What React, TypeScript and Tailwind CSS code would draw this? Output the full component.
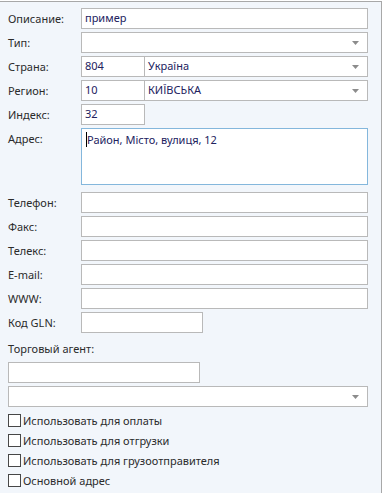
import React from "react";

const font = { fontFamily: '"Noto Sans", "Liberation Sans", sans-serif' };

function Arrow() {
    return (
        <svg width="7" height="4" viewBox="0 0 7 4" className="absolute right-[8px] top-[8px]">
            <path d="M0 0 H7 L3.5 4 Z" fill="#8c8c8c" />
        </svg>
    );
}

function Row({ label, children, className = "" }: { label: string; children?: React.ReactNode; className?: string }) {
    return (
        <div className={`flex h-[21px] items-center ${className}`}>
            <div className="w-[73px] shrink-0 text-[11px] text-[#2b2b2b] leading-none">{label}</div>
            {children}
        </div>
    );
}

function Box({ text = "", w = "w-[287px]", select = false, extra = "" }: { text?: string; w?: string; select?: boolean; extra?: string }) {
    return (
        <div className={`relative h-[21px] ${w} border border-[#b9b9b9] bg-white flex items-center pl-[3px] text-[11px] text-[#22225e] ${extra}`}>
            {text}
            {select && <Arrow />}
        </div>
    );
}

function Check({ label }: { label: string }) {
    return (
        <div className="flex items-center h-[13px] gap-[2px]">
            <span className="w-[13px] h-[13px] border border-[#474747] bg-white shrink-0"></span>
            <span className="text-[11px] text-[#2b2b2b] leading-none">{label}</span>
        </div>
    );
}

export default function App() {
    return (
        <div className="w-[385px] h-[493px] bg-white" style={font}>
            <div className="mt-[1px] w-[382px] h-[492px] border-t border-r border-[#a8a8a8] bg-[#f2f6fb] pl-[8px] pt-[6px]">
                <Row label="Описание:"><Box text="пример" /></Row>
                <Row label="Тип:" className="mt-[3px]"><Box select /></Row>
                <Row label="Страна:" className="mt-[3px]">
                    <Box text="804" w="w-[64px]" />
                    <Box text="Україна" w="w-[224px]" select extra="-ml-px" />
                </Row>
                <Row label="Регион:" className="mt-[3px]">
                    <Box text="10" w="w-[64px]" />
                    <Box text="КИЇВСЬКА" w="w-[224px]" select extra="-ml-px" />
                </Row>
                <Row label="Индекс:" className="mt-[3px]"><Box text="32" w="w-[64px]" /></Row>
                <div className="flex mt-[3px]">
                    <div className="w-[73px] shrink-0 text-[11px] text-[#2b2b2b] leading-none pt-[5px]">Адрес:</div>
                    <div className="w-[287px] h-[57px] border border-[#84b7dc] bg-white pl-[4px] pt-[5px] text-[11px] text-[#22225e] leading-none">
                        <span className="border-l border-black">Район, Місто, вулиця, 12</span>
                    </div>
                </div>
                <Row label="Телефон:" className="mt-[7px]"><Box /></Row>
                <Row label="Факс:" className="mt-[3px]"><Box /></Row>
                <Row label="Телекс:" className="mt-[3px]"><Box /></Row>
                <Row label="E-mail:" className="mt-[3px]"><Box /></Row>
                <Row label="WWW:" className="mt-[3px]"><Box /></Row>
                <Row label="Код GLN:" className="mt-[3px]"><Box w="w-[122px]" /></Row>
                <div className="mt-[10px] text-[11px] text-[#2b2b2b] leading-none">Торговый агент:</div>
                <div className="mt-[8px]"><Box w="w-[192px]" /></div>
                <div className="mt-[3px]"><Box w="w-[360px]" select /></div>
                <div className="mt-[7px] flex flex-col gap-[7px]">
                    <Check label="Использовать для оплаты" />
                    <Check label="Использовать для отгрузки" />
                    <Check label="Использовать для грузоотправителя" />
                    <Check label="Основной адрес" />
                </div>
            </div>
        </div>
    );
}
